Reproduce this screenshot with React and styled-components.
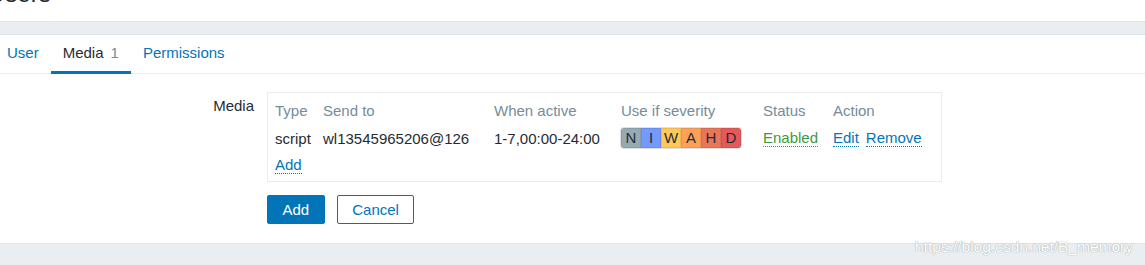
import styled, { createGlobalStyle } from 'styled-components';

const GlobalStyle = createGlobalStyle`
  html, body {
    margin: 0;
    padding: 0;
    background: #ebeef0;
    font-family: "Liberation Sans", Arial, sans-serif;
    font-size: 15px;
    color: #1f2c33;
  }
`;

const Page = styled.div`
  position: relative;
  width: 1145px;
  height: 265px;
  overflow: hidden;
  background: #ebeef0;
`;

const Header = styled.div`
  height: 21px;
  background: #fff;
  overflow: hidden;
`;

const Title = styled.h1`
  margin: -18px 0 0 -12px;
  font-size: 24px;
  line-height: 24px;
  font-weight: normal;
  color: #1f2c33;
`;

const Band = styled.div`
  height: 12px;
  border-top: 1px solid #dfe4e7;
  background: #ebeef0;
`;

const Card = styled.div`
  background: #fff;
  border-top: 1px solid #dfe4e7;
  border-bottom: 1px solid #dfe4e7;
`;

const Tabs = styled.div`
  display: flex;
  height: 38px;
  margin-left: -5px;
  border-bottom: 1px solid #ebebeb;
`;

const Tab = styled.div`
  height: 39px;
  padding: 0 12px;
  box-sizing: border-box;
  line-height: 36px;
  color: ${({ active }) => (active ? '#1f2c33' : '#0275b8')};
  border-bottom: 3px solid ${({ active }) => (active ? '#0275b8' : 'transparent')};
`;

const Count = styled.span`
  color: #768d99;
  margin-left: 7px;
`;

const Content = styled.div`
  padding: 18px 0 19px;
`;

const FormRow = styled.div`
  display: grid;
  grid-template-columns: 254px 1fr;
  column-gap: 13px;
`;

const Label = styled.div`
  text-align: right;
  padding-top: 5px;
  line-height: 17px;
`;

const MediaBox = styled.div`
  width: 675px;
  border: 1px solid #ebebeb;
  padding: 4px 7px 3px;
  box-sizing: border-box;
`;

const Grid = styled.div`
  display: grid;
  grid-template-columns: 48px 171px 127px 142px 70px auto;
  grid-template-rows: 27px 28px 26px;
  align-items: center;
`;

const Head = styled.div`
  color: #768d99;
  line-height: 17px;
`;

const Cell = styled.div`
  line-height: 17px;
  display: flex;
  gap: 7px;
  align-items: center;
`;

const Link = styled.a`
  display: inline-block;
  color: ${({ green }) => (green ? '#3c9a41' : '#0275b8')};
  line-height: 17px;
  text-decoration: none;
  border-bottom: 1px dotted currentColor;
  cursor: pointer;
`;

const Severity = styled.div`
  display: inline-flex;
  border-radius: 3px;
  overflow: hidden;
  box-shadow: 0 0 0 1px rgba(0, 0, 0, 0.12);
`;

const Sev = styled.span`
  width: 20px;
  height: 20px;
  line-height: 20px;
  text-align: center;
  background: ${({ bg }) => bg};
  color: #1f2c33;
  box-shadow: inset 0 0 0 1px rgba(0, 0, 0, 0.08);
`;

const Buttons = styled.div`
  grid-column: 2;
  display: flex;
  gap: 12px;
  margin-top: 13px;
`;

const Button = styled.button`
  height: 29px;
  padding: 0 14.5px;
  font-family: inherit;
  font-size: 15px;
  border-radius: 2px;
  border: 1px solid #0275b8;
  background: ${({ primary }) => (primary ? '#0275b8' : '#fff')};
  color: ${({ primary }) => (primary ? '#fff' : '#0275b8')};
  cursor: pointer;
`;

const Watermark = styled.div`
  position: absolute;
  left: 915px;
  top: 238px;
  font-size: 15.5px;
  color: #ffffff;
  text-shadow: 0 0 1px #9ea8ae, 0 0 1px #9ea8ae;
  white-space: nowrap;
`;

const severities = [
  ['N', '#97aab3'],
  ['I', '#7499ff'],
  ['W', '#ffc859'],
  ['A', '#ffa059'],
  ['H', '#e97659'],
  ['D', '#e45959'],
];

export default function App() {
  return (
    <>
      <GlobalStyle />
      <Page>
        <Header>
          <Title>Users</Title>
        </Header>
        <Band />
        <Card>
          <Tabs>
            <Tab>User</Tab>
            <Tab active>
              Media<Count>1</Count>
            </Tab>
            <Tab>Permissions</Tab>
          </Tabs>
          <Content>
            <FormRow>
              <Label>Media</Label>
              <MediaBox>
                <Grid>
                  <Head>Type</Head>
                  <Head>Send to</Head>
                  <Head>When active</Head>
                  <Head>Use if severity</Head>
                  <Head>Status</Head>
                  <Head>Action</Head>

                  <Cell>script</Cell>
                  <Cell>wl13545965206@126</Cell>
                  <Cell>1-7,00:00-24:00</Cell>
                  <Cell>
                    <Severity>
                      {severities.map(([s, bg]) => (
                        <Sev key={s} bg={bg}>{s}</Sev>
                      ))}
                    </Severity>
                  </Cell>
                  <Cell>
                    <Link green>Enabled</Link>
                  </Cell>
                  <Cell>
                    <Link>Edit</Link>
                    <Link>Remove</Link>
                  </Cell>

                  <Cell>
                    <Link>Add</Link>
                  </Cell>
                </Grid>
              </MediaBox>
              <Buttons>
                <Button primary>Add</Button>
                <Button>Cancel</Button>
              </Buttons>
            </FormRow>
          </Content>
        </Card>
        <Watermark>https://blog.csdn.net/B_memory</Watermark>
      </Page>
    </>
  );
}
